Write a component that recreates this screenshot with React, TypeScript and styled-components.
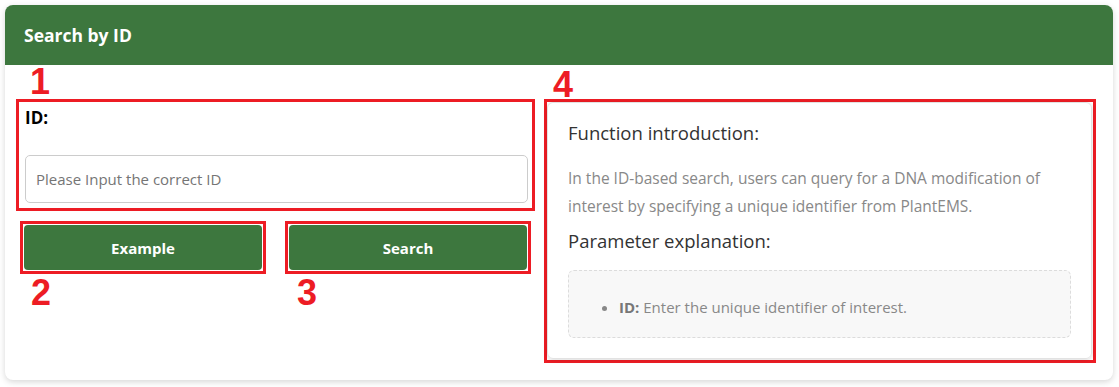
import React, { ReactElement, ReactNode } from "react";
import styled, { createGlobalStyle } from "styled-components";

const GlobalStyle = createGlobalStyle`
    html, body {
        margin: 0;
        padding: 0;
        background: #ffffff;
    }
    body {
        font-family: "Open Sans", "Noto Sans", sans-serif;
        color: #333;
    }
`;

const GREEN = "#3d773e";
const MARK = "#ed1c24";

interface MarkerProps {
    label: string;
    below?: boolean;
    indent: number;
    lift?: number;
    children: ReactNode;
}

// red numbered frame painted over the screenshot
function Marked({ label, below, indent, lift = 0, children }: MarkerProps): ReactElement {
    return (
        <MarkWrap>
            {!below && (
                <Digit $indent={indent} $lift={lift}>
                    {label}
                </Digit>
            )}
            {children}
            {below && (
                <Digit $indent={indent} $lift={lift}>
                    {label}
                </Digit>
            )}
        </MarkWrap>
    );
}

export default function App(): ReactElement {
    return (
        <>
            <GlobalStyle />
            <Page>
                <Card>
                    <CardHeader>Search by ID</CardHeader>
                    <CardBody>
                        <LeftCol>
                            <Marked label='1' indent={14}>
                                <FieldFrame>
                                    <FieldLabel>ID:</FieldLabel>
                                    <TextInput placeholder='Please Input the correct ID' />
                                </FieldFrame>
                            </Marked>
                            <ButtonRow>
                                <Marked label='2' indent={11} below lift={2}>
                                    <ButtonFrame>
                                        <ActionButton>Example</ActionButton>
                                    </ButtonFrame>
                                </Marked>
                                <Marked label='3' indent={12} below lift={2}>
                                    <ButtonFrame>
                                        <ActionButton>Search</ActionButton>
                                    </ButtonFrame>
                                </Marked>
                            </ButtonRow>
                        </LeftCol>
                        <Marked label='4' indent={9} lift={3}>
                            <HelpFrame>
                                <HelpPanel>
                                    <HelpTitle>Function introduction:</HelpTitle>
                                    <HelpText>
                                        In the ID-based search, users can query for a DNA
                                        modification of interest by specifying a unique
                                        identifier from PlantEMS.
                                    </HelpText>
                                    <HelpTitle $gap={9}>Parameter explanation:</HelpTitle>
                                    <ParamBox>
                                        <ParamList>
                                            <li>
                                                <b>ID:</b> Enter the unique identifier of
                                                interest.
                                            </li>
                                        </ParamList>
                                    </ParamBox>
                                </HelpPanel>
                            </HelpFrame>
                        </Marked>
                    </CardBody>
                </Card>
            </Page>
        </>
    );
}

const Page = styled.div`
    padding: 5px 6px 7px 5px;
`;

const Card = styled.div`
    height: 375px;
    border-radius: 8px;
    overflow: hidden;
    background: #fff;
    box-shadow: 0 2px 6px rgba(0, 0, 0, 0.16);
`;

const CardHeader = styled.div`
    height: 60px;
    display: flex;
    align-items: center;
    padding: 0 19px;
    background: ${GREEN};
    color: #fff;
    font-weight: 700;
    font-size: 17.5px;
`;

const CardBody = styled.div`
    display: grid;
    grid-template-columns: 519px 552px;
    column-gap: 9px;
    padding: 0 17px 0 11px;
`;

const LeftCol = styled.div`
    display: flex;
    flex-direction: column;
`;

const MarkWrap = styled.div`
    display: flex;
    flex-direction: column;
`;

const Digit = styled.div<{ $indent: number; $lift: number }>`
    height: 34px;
    line-height: 34px;
    padding-left: ${(p) => p.$indent}px;
    margin-top: ${(p) => p.$lift}px;
    margin-bottom: -${(p) => p.$lift}px;
    font-family: "Liberation Sans", Arial, sans-serif;
    font-weight: 700;
    font-size: 36px;
    color: ${MARK};
`;

const FieldFrame = styled.div`
    height: 112px;
    box-sizing: border-box;
    border: 3px solid ${MARK};
    padding: 4px 4px 5px 6px;
    display: flex;
    flex-direction: column;
    justify-content: space-between;
`;

const FieldLabel = styled.label`
    font-weight: 700;
    font-size: 17px;
    color: #000;
    line-height: 24px;
`;

const TextInput = styled.input`
    height: 48px;
    box-sizing: border-box;
    border: 1px solid #ccc;
    border-radius: 5px;
    padding: 0 10px;
    font-family: inherit;
    font-size: 15px;
    color: #555;
    outline: none;
    &::placeholder {
        color: #757575;
    }
`;

const ButtonRow = styled.div`
    display: grid;
    grid-template-columns: 1fr 1fr;
    column-gap: 19px;
    padding: 0 4px;
    margin-top: 10px;
`;

const ButtonFrame = styled.div`
    border: 3px solid ${MARK};
    padding: 1px;
`;

const ActionButton = styled.button`
    display: block;
    width: 100%;
    height: 45px;
    border: none;
    border-radius: 4px;
    background: ${GREEN};
    color: #fff;
    font-family: inherit;
    font-weight: 700;
    font-size: 15px;
    cursor: pointer;
`;

const HelpFrame = styled.div`
    height: 264px;
    box-sizing: border-box;
    border: 3px solid ${MARK};
    display: flex;
`;

const HelpPanel = styled.div`
    flex: 1;
    border: 1px solid #e2e2e2;
    border-radius: 6px;
    box-shadow: 0 1px 4px rgba(0, 0, 0, 0.15);
    padding: 19px 20px 0 20px;
    margin-right: 1px;
    margin-bottom: 1px;
`;

const HelpTitle = styled.div<{ $gap?: number }>`
    font-size: 18.5px;
    line-height: 21.6px;
    color: #333;
    margin-top: ${(p) => p.$gap ?? 0}px;
`;

const HelpText = styled.p`
    margin: 20px 0 0;
    font-size: 15.5px;
    line-height: 28.5px;
    color: #888;
`;

const ParamBox = styled.div`
    margin-top: 19px;
    height: 68px;
    box-sizing: border-box;
    border: 1px dashed #dcdcdc;
    border-radius: 6px;
    background: #f8f8f8;
    padding-top: 24px;
`;

const ParamList = styled.ul`
    margin: 0;
    padding-left: 50px;
    font-size: 15px;
    line-height: 24px;
    color: #888;
    b {
        color: #777;
    }
`;
